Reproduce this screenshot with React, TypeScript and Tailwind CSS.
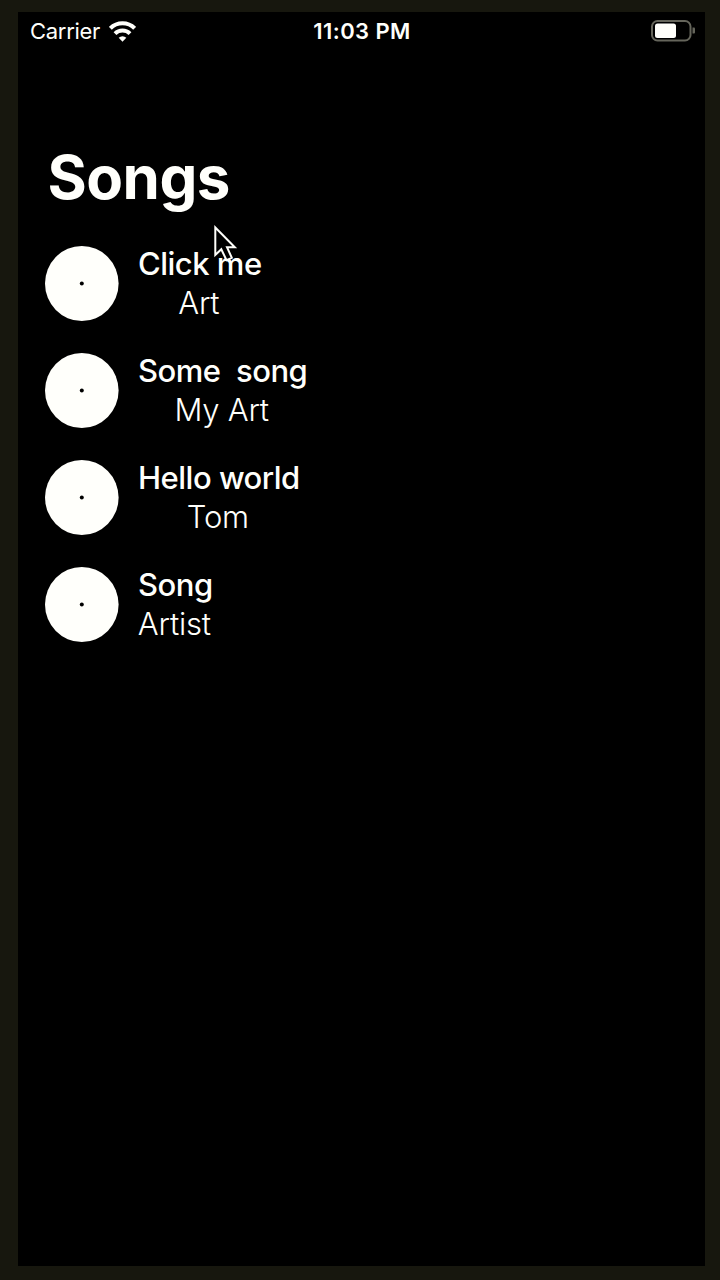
interface Song {
  title: string
  artist: string
}

const songs: Song[] = [
  { title: 'Click me', artist: 'Art' },
  { title: 'Some  song', artist: 'My Art' },
  { title: 'Hello world', artist: 'Tom' },
  { title: 'Song', artist: 'Artist' },
]

function StatusBar() {
  return (
    <div className="grid grid-cols-3 items-center h-[38px] pl-[12px] pr-[10px]">
      <div className="flex items-center gap-[9px]">
        <span className="text-[22px] leading-none tracking-[-0.3px]">Carrier</span>
        <svg className="w-[27px] h-[21px]" viewBox="0 0 27 21" fill="none" stroke="currentColor" strokeWidth="4">
          <path d="M1.4 7.3a17.2 17.2 0 0 1 24.2 0" />
          <path d="M6 12.6a10.7 10.7 0 0 1 15 0" />
          <path d="M13.5 20.8l-3.8-4a5.4 5.4 0 0 1 7.6 0z" fill="currentColor" stroke="none" />
        </svg>
      </div>
      <span className="text-center text-[22px] leading-none font-semibold tracking-[0.4px] -ml-[1px]">11:03 PM</span>
      <div className="flex justify-end">
        <svg className="w-[44px] h-[22px]" viewBox="0 0 44 22" fill="none">
          <rect x="1" y="1" width="38.5" height="19.5" rx="5.5" stroke="#65655b" strokeWidth="2" />
          <rect x="4" y="3.5" width="21" height="14.5" rx="2.5" fill="#fffffb" />
          <path d="M41.5 7.5h1.5q1 0 1 1v4q0 1-1 1h-1.5z" fill="#65655b" />
        </svg>
      </div>
    </div>
  )
}

function SongRow({ title, artist }: Song) {
  return (
    <li className="flex items-center gap-[19px] h-[75px]">
      <svg className="w-[74px] h-[76px] shrink-0" viewBox="0 0 74 76">
        <ellipse cx="36.8" cy="37.5" rx="36.8" ry="37.5" fill="#fffffb" />
        <circle cx="36.8" cy="37.5" r="2" fill="#000" />
      </svg>
      <div className="flex flex-col items-center whitespace-pre text-[31px] leading-[38.5px]">
        <span className="font-[550] tracking-[-0.5px]">{title}</span>
        <span className="font-[350] tracking-[-0.2px] -ml-[2px]">{artist}</span>
      </div>
    </li>
  )
}

export default function App() {
  return (
    <div className="relative w-[720px] h-[1280px] pl-[18px] pr-[15px] pt-[12px] pb-[14px] bg-[#17170e] text-[#fffffb] font-['Inter',sans-serif]">
      <div className="h-full bg-black">
        <StatusBar />
        <h1 className="pt-[91px] pb-[1px] pl-[29.5px] text-[60px] leading-[72px] font-bold tracking-[-0.5px]">Songs</h1>
        <ul className="flex flex-col gap-[32px] pt-[32px] pl-[27px]">
          {songs.map((song) => (
            <SongRow key={song.title} {...song} />
          ))}
        </ul>
      </div>
      <svg className="absolute left-[213px] top-[224px] w-[26px] h-[40px]" viewBox="0 0 26 40" fill="#000" stroke="#fffffb" strokeWidth="2">
        <path d="M2.3 3.5v27.5l6-5.8 5.2 11 5.3-2.4-4.8-10.6h7.8z" />
      </svg>
    </div>
  )
}
